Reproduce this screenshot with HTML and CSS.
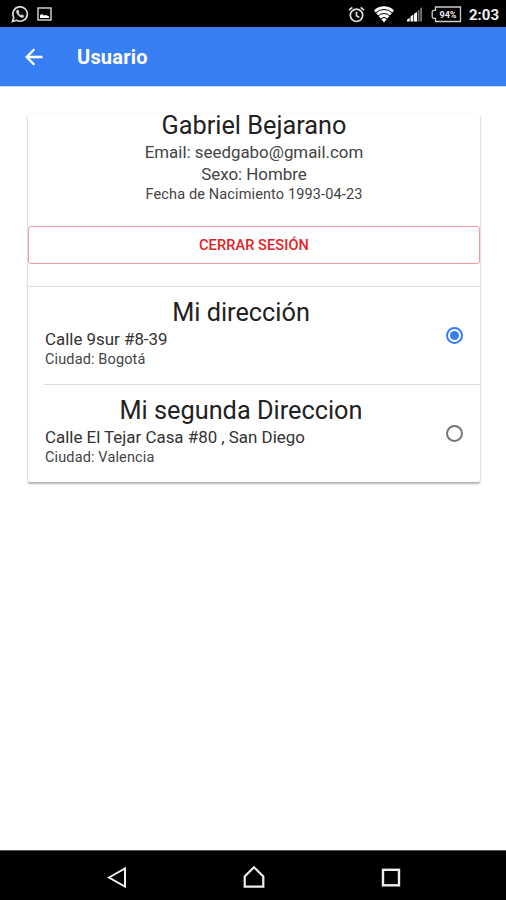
FILE: index.html
```html
<!DOCTYPE html>
<html lang="es">
<head>
    <meta charset="UTF-8">
    <meta name="viewport" content="width=device-width, initial-scale=1.0">
    <title>Usuario</title>
    <link rel="stylesheet" href="styles.css">
</head>
<body>

<div class="status-bar">
    <svg width="18" height="18" viewBox="0 0 18 18" fill="none" stroke="#ddd" stroke-width="1.7">
        <path d="M1.5 16.5l1.2-4.2A7.2 7.2 0 1 1 5.6 15.3z"/>
        <path d="M6 5.2c-1.2 1.2-.4 3.4 1.5 5.2s4 2.7 5.1 1.4l.2-1-2-1.1-1 .9c-1-.4-2-1.4-2.4-2.4l.7-1L7.2 5z" fill="#ddd" stroke="#ddd" stroke-width="0.6"/>
    </svg>
    <svg class="icon-image" width="15" height="14" viewBox="0 0 15 14">
        <rect x="1" y="1" width="13" height="12" fill="none" stroke="#ccc" stroke-width="1.5"/>
        <path d="M3 11V8l2-1 2 1.5L9 8l3 1.5V11z" fill="#fff"/>
    </svg>
    <div class="status-right">
        <svg width="17" height="17" viewBox="0 0 17 17" fill="none" stroke="#ddd" stroke-width="1.7">
            <circle cx="8.5" cy="9.3" r="6.2"/>
            <path d="M1 4.2L4.3 1.3M16 4.2L12.7 1.3M8.5 5.8v4l2.8 1.6"/>
        </svg>
        <svg class="icon-wifi" width="22" height="18" viewBox="0 0 22 18">
            <path d="M1 5.5a14 14 0 0 1 20 0L11 17.500z" fill="#fff"/>
            <path d="M2.5 8a12 12 0 0 1 17 0M5 11a8.5 8.5 0 0 1 12 0M7.7 13.8a5 5 0 0 1 6.6 0" fill="none" stroke="#000" stroke-width="1"/>
        </svg>
        <svg class="icon-signal" width="17" height="16" viewBox="0 0 17 16">
            <path d="M1 15.5v-1.800l2.700-2v3.800zM4.500 15.500v-5L7.300 8.500v7zM8 15.500V7.800L11 6v9.500z" fill="#fff"/>
            <path d="M11.700 15.500V5l1.800-1.500v12zM14.200 15.500V2.500L16 1v14.500z" fill="#777"/>
        </svg>
        <svg class="icon-battery" width="31" height="17" viewBox="0 0 31 17">
            <path d="M4.500 1h25v14.500h-25v-3.200H2.200l-1-1.500V5.800l1-1.500h2.300z" fill="none" stroke="#ccc" stroke-width="1.3"/>
            <text class="battery-text" x="17" y="11.800" text-anchor="middle">94%</text>
        </svg>
        <span class="clock">2:03</span>
    </div>
</div>

<div class="toolbar">
    <svg width="18" height="18" viewBox="0 0 18 18" fill="none" stroke="#fff" stroke-width="2.3">
        <path d="M17.500 9H2M9.300 1.300L1.700 9l7.600 7.700"/>
    </svg>
    <h1>Usuario</h1>
</div>

<div class="content">
    <div class="card">
        <div class="profile">
            <h2>Gabriel Bejarano</h2>
            <p class="email">Email: seedgabo@gmail.com</p>
            <p class="gender">Sexo: Hombre</p>
            <p class="birth">Fecha de Nacimiento 1993-04-23</p>
        </div>
        <button class="logout-btn" type="button">CERRAR SESIÓN</button>

        <div class="addresses">
            <div class="address">
                <div class="address-text">
                    <h2>Mi dirección</h2>
                    <p class="street">Calle 9sur #8-39</p>
                    <p class="city">Ciudad: Bogotá</p>
                </div>
                <span class="radio checked"></span>
            </div>
            <div class="address">
                <div class="address-text">
                    <h2>Mi segunda Direccion</h2>
                    <p class="street">Calle El Tejar Casa #80 , San Diego</p>
                    <p class="city">Ciudad: Valencia</p>
                </div>
                <span class="radio"></span>
            </div>
        </div>
    </div>
</div>

<div class="nav-bar">
    <svg width="22" height="24" viewBox="0 0 22 24" fill="none" stroke="#eee" stroke-width="2">
        <path d="M3 12.500L19 3.500v18z"/>
    </svg>
    <svg width="24" height="24" viewBox="0 0 24 24" fill="none" stroke="#eee" stroke-width="2.200">
        <path d="M2.700 21.700V11.500L12 2.200l9.300 9.300v10.200z"/>
    </svg>
    <svg width="22" height="24" viewBox="0 0 22 24" fill="none" stroke="#eee" stroke-width="2.400">
        <rect x="3" y="4.800" width="16" height="15.500"/>
    </svg>
</div>

</body>
</html>
```
FILE: styles.css
```css
body {
    font-family: Roboto, sans-serif;
    background-color: #fff;
    color: #222;
    margin: 0;
    height: 900px;
    display: flex;
    flex-direction: column;
    overflow: hidden;
}

h1, h2, p {
    margin: 0;
    font-weight: normal;
    white-space: nowrap;
}

.status-bar {
    display: flex;
    align-items: center;
    height: 27px;
    padding: 1px 7px 0 11px;
    box-sizing: border-box;
    background-color: #000;
    color: #eee;
}

.icon-image {
    margin-left: 8px;
}

.status-right {
    display: flex;
    align-items: center;
    margin-left: auto;
}

.icon-wifi {
    margin-left: 8px;
}

.icon-signal {
    margin-left: 11px;
}

.icon-battery {
    margin-left: 8px;
}

.battery-text {
    font-size: 9px;
    font-weight: bold;
    fill: #eee;
}

.clock {
    margin-left: 7px;
    padding-top: 2px;
    font-size: 15px;
    font-weight: bold;
    line-height: 25px;
}

.toolbar {
    display: flex;
    align-items: center;
    height: 59px;
    padding-left: 25px;
    background-color: #387ef5;
    border-bottom: 1px solid #c5d9fc;
    color: #fff;
}

.toolbar h1 {
    margin-left: 34px;
    padding-top: 2px;
    font-size: 20px;
    font-weight: bold;
    letter-spacing: 0.2px;
    line-height: 57px;
}

.content {
    flex: 1;
    padding: 27px 26px 0 28px;
}

.card {
    height: 368px;
    border-radius: 2px;
    background-color: #fff;
    box-shadow: 0 2px 2px rgba(0, 0, 0, 0.25), 0 1px 3px rgba(0, 0, 0, 0.12);
}

h2 {
    font-size: 25.3px;
    line-height: 24px;
    text-align: center;
}

.profile {
    height: 112px;
    text-align: center;
}

.email {
    margin-top: 3px;
}

.email,
.gender {
    font-size: 16.9px;
    line-height: 22px;
    color: #444;
}

.birth {
    margin-top: 1px;
    font-size: 14.5px;
    letter-spacing: 0.13px;
    line-height: 18px;
    color: #444;
}

.logout-btn {
    display: block;
    width: 100%;
    height: 38px;
    padding: 0;
    border: 1px solid #f4989c;
    border-radius: 3px;
    background: transparent;
    color: #e51c23;
    font-family: inherit;
    font-size: 14.5px;
    font-weight: 500;
    letter-spacing: 0.12px;
    cursor: pointer;
}

.addresses {
    margin-top: 22px;
    border-top: 1px solid #dedede;
}

.address {
    display: flex;
    align-items: center;
    height: 97px;
    margin-left: 16px;
    padding-right: 17px;
    box-sizing: border-box;
}

.address + .address {
    border-top: 1px solid #dedede;
    height: 98px;
}

.address-text {
    flex: 1;
    padding: 0 9px 2px 1px;
}

.street {
    margin-top: 3px;
    font-size: 16.9px;
    line-height: 22px;
    color: #333;
}

.city {
    margin-top: 1px;
    font-size: 14.5px;
    letter-spacing: 0.13px;
    line-height: 18px;
    color: #444;
}

.radio {
    display: flex;
    align-items: center;
    justify-content: center;
    width: 17px;
    height: 17px;
    box-sizing: border-box;
    border: 2px solid #757575;
    border-radius: 50%;
}

.radio.checked {
    border-color: #387ef5;
}

.radio.checked::after {
    content: "";
    width: 9px;
    height: 9px;
    border-radius: 50%;
    background-color: #387ef5;
}

.nav-bar {
    display: flex;
    align-items: center;
    justify-content: center;
    gap: 114px;
    height: 50px;
    padding: 2px 0 0 2px;
    box-sizing: border-box;
    background-color: #000;
    border-top: 1px solid #555;
}
```
